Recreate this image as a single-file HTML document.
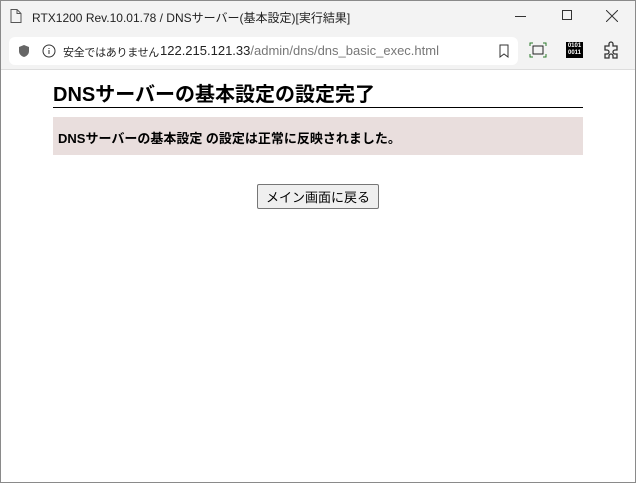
<!DOCTYPE html>
<html><head><meta charset="utf-8"><style>
*{margin:0;padding:0;box-sizing:border-box}
body{width:636px;height:483px;overflow:hidden;background:#fff;font-family:"Liberation Sans","Noto Sans CJK JP",sans-serif;position:relative;border:1px solid #8a8a8a;}
.title{position:absolute;left:0;top:0;width:634px;height:31px;background:#f3f3f3;font-size:12px;color:#222}
.tool{position:absolute;left:0;top:31px;width:634px;height:38px;background:#f3f3f3;border-bottom:1px solid #ddd}
.addr{position:absolute;left:8px;top:5px;width:509px;height:28px;background:#fff;border-radius:6px}
.abs{position:absolute}
h1{position:absolute;left:52px;top:82px;width:530px;font-size:20px;font-weight:bold;line-height:24px;border-bottom:1px solid #000;height:25px;color:#000}
.box{position:absolute;left:52px;top:116px;width:530px;height:38px;background:#e9dedd;font-size:13px;font-weight:bold;padding:11px 0 0 5px;color:#000}
button{position:absolute;left:256px;top:183px;width:122px;height:25px;font-size:13px;font-family:inherit;background:#efefef;border:1px solid #767676;border-radius:2px;color:#000}
</style></head><body>
<div class="title">
 <svg class="abs" style="left:9px;top:8px" width="12" height="14"><path d="M1 .5h6l4 4v9H1z M7 .5v4h4" fill="none" stroke="#555"/></svg>
 <div class="abs" style="left:31px;top:8px">RTX1200 Rev.10.01.78 / DNSサーバー(基本設定)[実行結果]</div>
 <div class="abs" style="left:514px;top:15px;width:11px;height:1px;background:#333"></div>
 <div class="abs" style="left:561px;top:9px;width:10px;height:10px;border:1px solid #333"></div>
 <svg class="abs" style="left:605px;top:9px" width="12" height="12"><path d="M0 0L12 12M12 0L0 12" stroke="#333"/></svg>
</div>
<div class="tool">
 <div class="addr">
  <svg class="abs" style="left:9px;top:7px" width="12" height="14"><path d="M6 1L1 3v4c0 3 2 5 5 6 3-1 5-3 5-6V3z" fill="#666"/></svg>
  <svg class="abs" style="left:33px;top:7px" width="14" height="14"><circle cx="7" cy="7" r="6" fill="none" stroke="#333"/><path d="M7 6v4M7 4v1" stroke="#333"/></svg>
  <div class="abs" style="left:54px;top:7px;font-size:11px;color:#222;letter-spacing:-0.3px">安全ではありません</div>
  <div class="abs" style="left:151px;top:6px;font-size:13px;color:#222">122.215.121.33<span style="color:#777">/admin/dns/dns_basic_exec.html</span></div>
  <svg class="abs" style="left:490px;top:7px" width="10" height="14"><path d="M1 1h8v12L5 10 1 13z" fill="none" stroke="#333"/></svg>
 </div>
 <svg class="abs" style="left:528px;top:10px" width="18" height="16"><path d="M1 4V1h3M14 1h3v3M17 12v3h-3M4 15H1v-3" stroke="#2a7a2a" fill="none"/><rect x="4" y="4" width="10" height="8" fill="none" stroke="#222"/></svg>
 <div class="abs" style="left:565px;top:10px;width:17px;height:16px;background:#000;color:#fff;font-size:6px;line-height:7px;text-align:center;font-weight:bold;padding-top:1px">0101<br>0011</div>
 <svg class="abs" style="left:601px;top:8px" width="20" height="20"><path d="M3 6h4V4a2 2 0 014 0v2h4v4h-2a2 2 0 000 4h2v4H11v-2a2 2 0 00-4 0v2H3v-4h2a2 2 0 000-4H3z" fill="none" stroke="#333" stroke-width="1.3"/></svg>
</div>
<h1>DNSサーバーの基本設定の設定完了</h1>
<div class="box">DNSサーバーの基本設定 の設定は正常に反映されました。</div>
<button>メイン画面に戻る</button>
</body></html>
